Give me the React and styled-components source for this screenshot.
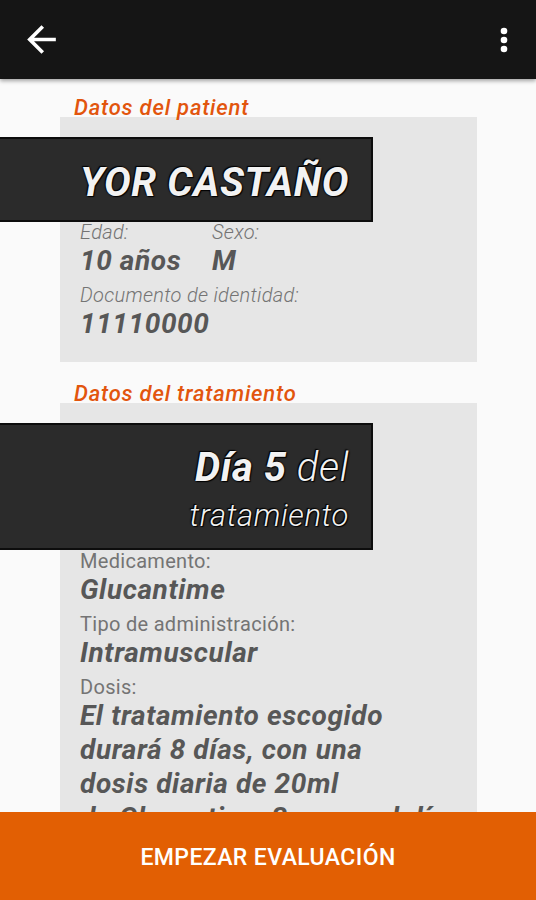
import React from 'react'
import styled, { createGlobalStyle } from 'styled-components'

const GlobalStyle = createGlobalStyle`
  html, body {
    margin: 0;
    padding: 0;
    background: #fafafa;
    font-family: Roboto, "Liberation Sans", sans-serif;
  }
`

const patient = { name: 'YOR CASTAÑO', age: '10 años', sex: 'M', document: '11110000' }

const treatment = {
  day: 5,
  fields: [
    { label: 'Medicamento:', value: ['Glucantime'] },
    { label: 'Tipo de administración:', value: ['Intramuscular'] },
    {
      label: 'Dosis:',
      value: [
        'El tratamiento escogido',
        'durará 8 días, con una',
        'dosis diaria de 20ml',
        'de Glucantime 3 veces al día.',
      ],
    },
  ],
}

const BackIcon = () => (
  <svg width="43" height="43" viewBox="0 0 24 24" fill="#fff">
    <path d="M20 11H7.83l5.59-5.59L12 4l-8 8 8 8 1.41-1.41L7.83 13H20v-2z" />
  </svg>
)

const MoreIcon = () => (
  <svg width="36" height="36" viewBox="0 0 24 24" fill="#fff">
    <circle cx="12" cy="6" r="2.2" />
    <circle cx="12" cy="12" r="2.2" />
    <circle cx="12" cy="18" r="2.2" />
  </svg>
)

const Field = ({ label, value, italicLabel }) => (
  <div>
    <Label $italic={italicLabel}>{label}</Label>
    <Value>
      {[].concat(value).map((line) => (
        <ValueLine key={line}>{line}</ValueLine>
      ))}
    </Value>
  </div>
)

const App = () => {
  return (
    <Screen>
      <GlobalStyle />
      <Toolbar>
        <IconButton aria-label="Atrás">
          <BackIcon />
        </IconButton>
        <IconButton aria-label="Más opciones">
          <MoreIcon />
        </IconButton>
      </Toolbar>

      <Main>
        <Section>
          <SectionTitle>Datos del patient</SectionTitle>
          <Card>
            <Banner>
              <BannerLine $size={40}>
                <strong>{patient.name}</strong>
              </BannerLine>
            </Banner>
            <Fields>
              <Columns>
                <Field italicLabel label="Edad:" value={patient.age} />
                <Field italicLabel label="Sexo:" value={patient.sex} />
              </Columns>
              <Field italicLabel label="Documento de identidad:" value={patient.document} />
            </Fields>
          </Card>
        </Section>

        <Section>
          <SectionTitle>Datos del tratamiento</SectionTitle>
          <Card>
            <Banner $tall>
              <BannerLine $size={40}>
                <strong>Día {treatment.day}</strong> del
              </BannerLine>
              <BannerLine $size={31} $height={50}>
                tratamiento
              </BannerLine>
            </Banner>
            <Fields $spaced>
              {treatment.fields.map((f) => (
                <Field key={f.label} label={f.label} value={f.value} />
              ))}
            </Fields>
          </Card>
        </Section>
      </Main>

      <StartButton>EMPEZAR EVALUACIÓN</StartButton>
    </Screen>
  )
}

export default App

const Screen = styled.div`
  height: 100vh;
  display: flex;
  flex-direction: column;
  overflow: hidden;
  background: #fafafa;
`

const Toolbar = styled.header`
  flex: 0 0 79px;
  display: flex;
  align-items: center;
  justify-content: space-between;
  padding: 0 14px 0 20px;
  background: #151515;
  box-shadow: 0 2px 4px rgba(0, 0, 0, 0.35);
  position: relative;
  z-index: 2;
`

const IconButton = styled.button`
  display: flex;
  padding: 0;
  border: 0;
  background: none;
  cursor: pointer;
`

const Main = styled.main`
  flex: 1;
  overflow: hidden;
  padding: 18px 59px 0 60px;
  display: flex;
  flex-direction: column;
  gap: 21px;
`

const Section = styled.section`
  display: flex;
  flex-direction: column;
`

const SectionTitle = styled.h2`
  margin: 0 0 -2px 0;
  padding-left: 14px;
  font-size: 22px;
  line-height: 22px;
  letter-spacing: 0.8px;
  font-weight: 500;
  font-style: italic;
  color: #e2550d;
  position: relative;
  z-index: 1;
`

const Card = styled.div`
  background: #e6e6e6;
  padding: 20px 0 21px 0;
`

const Banner = styled.div`
  margin-left: -60px;
  width: 373px;
  box-sizing: border-box;
  background: #2b2b2b;
  border: 2px solid #0d0d0d;
  border-left: 0;
  padding: ${(p) => (p.$tall ? '20px 22px 7px 0' : '21px 22px 14px 0')};
  text-align: right;
  color: #f2f2f2;
  text-shadow: 0 0 2px #000, 1px 1px 1px #000, -1px -1px 1px #000;
`

const BannerLine = styled.div`
  font-size: ${(p) => p.$size}px;
  line-height: ${(p) => p.$height || 46}px;
  letter-spacing: 0.6px;
  font-style: italic;
  font-weight: 300;

  strong {
    font-weight: 700;
  }
`

const Fields = styled.div`
  display: flex;
  flex-direction: column;
  gap: 7px;
  padding: ${(p) => (p.$spaced ? '1px' : '0')} 20px 0 20px;
`

const Columns = styled.div`
  display: grid;
  grid-template-columns: 132px auto;
`

const Label = styled.div`
  font-size: 20px;
  line-height: 20px;
  letter-spacing: 0.3px;
  font-weight: ${(p) => (p.$italic ? 300 : 400)};
  font-style: ${(p) => (p.$italic ? 'italic' : 'normal')};
  color: #747474;
  white-space: nowrap;
`

const Value = styled.div`
  margin-top: 2px;
  font-size: 28px;
  line-height: 34px;
  letter-spacing: 0.6px;
  font-weight: 700;
  font-style: italic;
  color: #575757;
`

const ValueLine = styled.div`
  white-space: nowrap;
`

const StartButton = styled.button`
  flex: 0 0 88px;
  border: 0;
  padding: 3px 0 0 0;
  background: #e25f03;
  color: #fff;
  font-family: Roboto, "Liberation Sans", sans-serif;
  font-size: 23px;
  letter-spacing: 0.4px;
  font-weight: 500;
  cursor: pointer;
  position: relative;
  z-index: 2;
`
